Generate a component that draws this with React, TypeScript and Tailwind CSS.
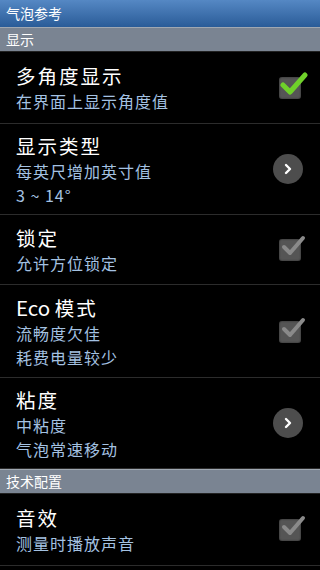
import React from 'react';

const font = { fontFamily: '"Noto Sans CJK SC", "Noto Sans", sans-serif' };

type Row = {
  title: React.ReactNode;
  key: string;
  lines: string[];
  kind: 'checkOn' | 'checkOff' | 'arrow';
  h: string;
};

const CheckBox: React.FC<{ on: boolean }> = ({ on }) => (
  <div className="relative w-[22px] h-[22px] rounded-[3px] bg-[#555555] shadow-[inset_0_0_2px_#222]">
    <svg className="absolute -top-[7px] left-[1px]" width="28" height="28" viewBox="0 0 28 28">
      {on ? (
        <path
          d="M3 15 L10 22 L25 5"
          fill="none"
          stroke="#6fd12a"
          strokeWidth="5"
          strokeLinecap="round"
          strokeLinejoin="round"
        />
      ) : (
        <path
          d="M4 15 L10 21 L23 6"
          fill="none"
          stroke="#8a8a8a"
          strokeWidth="4"
          strokeLinecap="round"
          strokeLinejoin="round"
        />
      )}
    </svg>
  </div>
);

const Arrow: React.FC = () => (
  <div className="w-[30px] h-[30px] rounded-full bg-[#4d4d4d] flex items-center justify-center">
    <svg width="14" height="14" viewBox="0 0 14 14">
      <path d="M5 3 L9 7 L5 11" fill="none" stroke="#ffffff" strokeWidth="2.4" strokeLinecap="round" strokeLinejoin="round" />
    </svg>
  </div>
);

const Header: React.FC<{ label: string }> = ({ label }) => (
  <div className="h-[25px] bg-[#7a8492] border-t border-[#a0a8b2] border-b border-b-[#222] flex items-center px-[6px] text-[14px] text-white">
    {label}
  </div>
);

const Item: React.FC<{ row: Row }> = ({ row }) => (
  <div className={`${row.h} flex items-center border-b border-[#2c2c2c] pl-[16px] pr-[19px]`}>
    <div className="flex-1 flex flex-col">
      <div className="text-[19.5px] tracking-[2px] leading-[29px] text-white">{row.title}</div>
      {row.lines.map((l) => (
        <div key={l} className="text-[16px] tracking-[1px] leading-[23.5px] text-[#a4c2e2]">
          {l}
        </div>
      ))}
    </div>
    {row.kind === 'arrow' ? (
      <div className="mr-[-2px]">
        <Arrow />
      </div>
    ) : (
      <div className="mt-[1px]">
        <CheckBox on={row.kind === 'checkOn'} />
      </div>
    )}
  </div>
);

const display: Row[] = [
  { key: 'a', title: '多角度显示', lines: ['在界面上显示角度值'], kind: 'checkOn', h: 'h-[72px]' },
  { key: 'b', title: '显示类型', lines: ['每英尺增加英寸值', '3 ~ 14°'], kind: 'arrow', h: 'h-[91px]' },
  { key: 'c', title: '锁定', lines: ['允许方位锁定'], kind: 'checkOff', h: 'h-[70px]' },
  {
    key: 'd',
    title: (
      <>
        <span className="tracking-normal text-[20.5px]">Eco </span>模式
      </>
    ),
    lines: ['流畅度欠佳', '耗费电量较少'],
    kind: 'checkOff',
    h: 'h-[93px]',
  },
  { key: 'e', title: '粘度', lines: ['中粘度', '气泡常速移动'], kind: 'arrow', h: 'h-[91px]' },
];

const tech: Row[] = [
  { key: 'f', title: '音效', lines: ['测量时播放声音'], kind: 'checkOff', h: 'h-[72px]' },
];

export default function App() {
  return (
    <div className="w-[320px] h-[570px] overflow-hidden bg-black" style={font}>
      <div className="h-[27px] bg-gradient-to-b from-[#5588c4] to-[#2a5c98] flex items-center px-[6px] text-[14px] text-white">
        气泡参考
      </div>
      <Header label="显示" />
      {display.map((r) => (
        <Item key={r.key} row={r} />
      ))}
      <Header label="技术配置" />
      {tech.map((r) => (
        <Item key={r.key} row={r} />
      ))}
    </div>
  );
}
